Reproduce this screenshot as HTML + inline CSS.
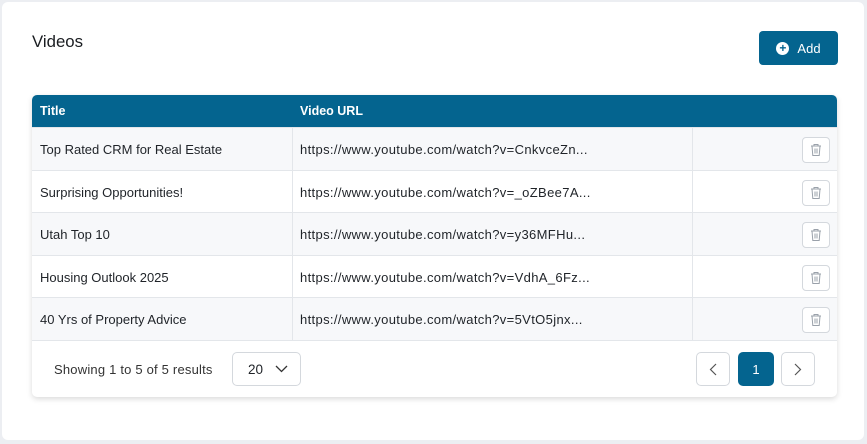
<!DOCTYPE html>
<html><head><style>
*{box-sizing:border-box;margin:0;padding:0}
body{width:867px;height:444px;background:#eceef2;font-family:"Liberation Sans",sans-serif;color:#1f2328;position:relative;overflow:hidden}
.card{position:absolute;left:2px;top:2px;width:862px;height:438px;background:#fff;border-radius:6px}
.h{position:absolute;left:32px;top:32px;font-size:16.8px;color:#1a1d21}
.add{position:absolute;left:759px;top:31px;width:79px;height:34px;background:#04648f;border-radius:4px;color:#fff;font-size:13px;display:flex;align-items:center;justify-content:center;gap:8px}
.add .c{width:13px;height:13px;border-radius:50%;background:#fff;color:#04648f;font-size:12px;line-height:13px;text-align:center;font-weight:bold}
.tbl{position:absolute;left:32px;top:95px;width:805px;height:302px;border-radius:5px;box-shadow:0 2px 6px rgba(0,0,0,.15);overflow:hidden;background:#fff}
.hd{height:32px;background:#04648f;color:#fff;font-size:12.5px;font-weight:bold;position:relative}
.hd span{position:absolute;top:9px}
.r{height:42.6px;border-top:1px solid #e3e6ea;position:relative;font-size:13px}
.r:nth-child(even){background:#f7f8fa}
.r span{position:absolute;top:14px}
.r span.u{letter-spacing:0.35px}
.r .v1{position:absolute;left:260px;top:0;bottom:0;border-left:1px solid #e3e6ea}
.r .v2{position:absolute;left:660px;top:0;bottom:0;border-left:1px solid #e3e6ea}
.tr{position:absolute;left:770px;top:9px;width:28px;height:26px;border:1px solid #d4d8dd;border-radius:4px;background:#fff;display:flex;align-items:center;justify-content:center}
.ft{position:absolute;left:0;top:245px;width:805px;height:57px;border-top:1px solid #e3e6ea;font-size:13px}
.btn{position:absolute;top:11px;height:34px;border:1px solid #d4d8dd;border-radius:5px;display:flex;align-items:center;justify-content:center;background:#fff}
</style></head><body>
<div class="card">
</div>
<div class="h">Videos</div>
<div class="add"><div class="c">+</div>Add</div>
<div class="tbl">
<div class="hd"><span style="left:8px">Title</span><span style="left:268px">Video URL</span></div>
<div class="r"><span style="left:8px">Top Rated CRM for Real Estate</span><div class="v1"></div><span class="u" style="left:268px">https://www.youtube.com/watch?v=CnkvceZn...</span><div class="v2"></div><div class="tr"><svg width="12" height="14" viewBox="0 0 12 14" fill="none" stroke="#9aa1aa" stroke-width="1"><path d="M1 3h10M4 3V1.5h4V3M2 3l.8 9.5h6.4L10 3M5 5.5v5M7 5.5v5"/></svg></div></div>
<div class="r"><span style="left:8px">Surprising Opportunities!</span><div class="v1"></div><span class="u" style="left:268px">https://www.youtube.com/watch?v=_oZBee7A...</span><div class="v2"></div><div class="tr"><svg width="12" height="14" viewBox="0 0 12 14" fill="none" stroke="#9aa1aa" stroke-width="1"><path d="M1 3h10M4 3V1.5h4V3M2 3l.8 9.5h6.4L10 3M5 5.5v5M7 5.5v5"/></svg></div></div>
<div class="r"><span style="left:8px">Utah Top 10</span><div class="v1"></div><span class="u" style="left:268px">https://www.youtube.com/watch?v=y36MFHu...</span><div class="v2"></div><div class="tr"><svg width="12" height="14" viewBox="0 0 12 14" fill="none" stroke="#9aa1aa" stroke-width="1"><path d="M1 3h10M4 3V1.5h4V3M2 3l.8 9.5h6.4L10 3M5 5.5v5M7 5.5v5"/></svg></div></div>
<div class="r"><span style="left:8px">Housing Outlook 2025</span><div class="v1"></div><span class="u" style="left:268px">https://www.youtube.com/watch?v=VdhA_6Fz...</span><div class="v2"></div><div class="tr"><svg width="12" height="14" viewBox="0 0 12 14" fill="none" stroke="#9aa1aa" stroke-width="1"><path d="M1 3h10M4 3V1.5h4V3M2 3l.8 9.5h6.4L10 3M5 5.5v5M7 5.5v5"/></svg></div></div>
<div class="r"><span style="left:8px">40 Yrs of Property Advice</span><div class="v1"></div><span class="u" style="left:268px">https://www.youtube.com/watch?v=5VtO5jnx...</span><div class="v2"></div><div class="tr"><svg width="12" height="14" viewBox="0 0 12 14" fill="none" stroke="#9aa1aa" stroke-width="1"><path d="M1 3h10M4 3V1.5h4V3M2 3l.8 9.5h6.4L10 3M5 5.5v5M7 5.5v5"/></svg></div></div>
<div class="ft">
<span style="position:absolute;left:22px;top:21px;color:#333;letter-spacing:0.2px">Showing 1 to 5 of 5 results</span>
<div class="btn" style="left:200px;width:69px;justify-content:flex-start;padding-left:15px;gap:12px;font-size:13.5px">20 <svg width="13" height="8" viewBox="0 0 13 8" fill="none" stroke="#333" stroke-width="1.3"><path d="M1 1l5.5 5.5L12 1"/></svg></div>
<div class="btn" style="left:664px;width:34px"><svg width="8" height="13" viewBox="0 0 8 13" fill="none" stroke="#555" stroke-width="1.2"><path d="M7 1L1.5 6.5L7 12"/></svg></div>
<div class="btn" style="left:706px;width:36px;background:#04648f;border-color:#04648f;color:#fff;font-size:13px">1</div>
<div class="btn" style="left:749px;width:34px"><svg width="8" height="13" viewBox="0 0 8 13" fill="none" stroke="#555" stroke-width="1.2"><path d="M1 1l5.5 5.5L1 12"/></svg></div>
</div>
</div>
</body></html>
